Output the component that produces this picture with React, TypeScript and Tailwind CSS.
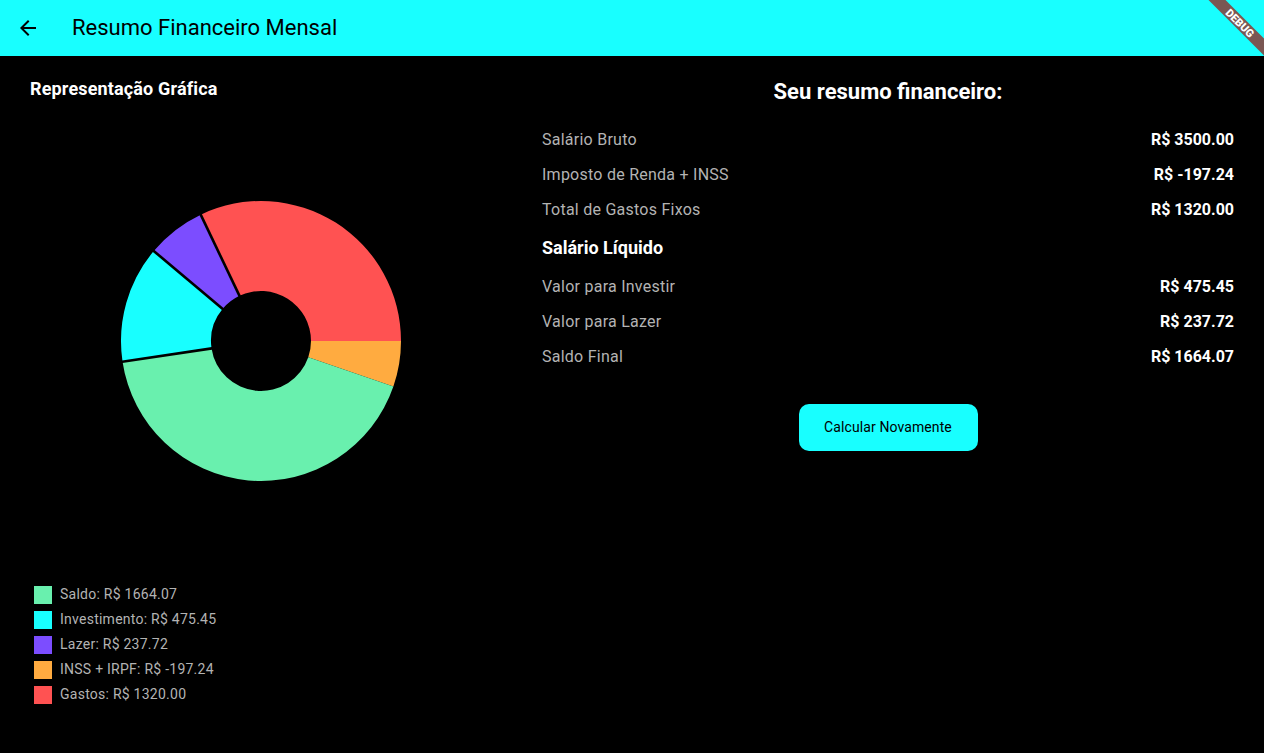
import React from "react";

type Slice = { color: string; from: number; to: number };

// angles in degrees, clockwise from 3 o'clock
const slices: Slice[] = [
  { color: "#ffab40", from: 0, to: 19 },
  { color: "#69f0ae", from: 19, to: 171.5 },
  { color: "#18ffff", from: 171.5, to: 220 },
  { color: "#7c4dff", from: 220, to: 244.5 },
  { color: "#ff5252", from: 244.5, to: 360 },
];

const dividers = [171.5, 220, 244.5];

const legend = [
  { color: "bg-[#69f0ae]", label: "Saldo: R$ 1664.07" },
  { color: "bg-[#18ffff]", label: "Investimento: R$ 475.45" },
  { color: "bg-[#7c4dff]", label: "Lazer: R$ 237.72" },
  { color: "bg-[#ffab40]", label: "INSS + IRPF: R$ -197.24" },
  { color: "bg-[#ff5252]", label: "Gastos: R$ 1320.00" },
];

const rows = [
  { label: "Salário Bruto", value: "R$ 3500.00" },
  { label: "Imposto de Renda + INSS", value: "R$ -197.24" },
  { label: "Total de Gastos Fixos", value: "R$ 1320.00" },
  { label: "Salário Líquido", value: "", strong: true },
  { label: "Valor para Investir", value: "R$ 475.45" },
  { label: "Valor para Lazer", value: "R$ 237.72" },
  { label: "Saldo Final", value: "R$ 1664.07" },
];

function pt(cx: number, cy: number, r: number, deg: number) {
  const a = (deg * Math.PI) / 180;
  return [cx + r * Math.cos(a), cy + r * Math.sin(a)];
}

function sector(from: number, to: number, r0: number, r1: number) {
  const c = 150;
  const large = to - from > 180 ? 1 : 0;
  const [ox0, oy0] = pt(c, c, r1, from);
  const [ox1, oy1] = pt(c, c, r1, to);
  const [ix1, iy1] = pt(c, c, r0, to);
  const [ix0, iy0] = pt(c, c, r0, from);
  return `M${ox0} ${oy0} A${r1} ${r1} 0 ${large} 1 ${ox1} ${oy1} L${ix1} ${iy1} A${r0} ${r0} 0 ${large} 0 ${ix0} ${iy0} Z`;
}

function Donut() {
  return (
    <svg width="300" height="300" viewBox="0 0 300 300">
      {slices.map((s) => (
        <path key={s.color} d={sector(s.from, s.to, 50, 140)} fill={s.color} />
      ))}
      {dividers.map((d) => {
        const [x0, y0] = pt(150, 150, 48, d);
        const [x1, y1] = pt(150, 150, 142, d);
        return <line key={d} x1={x0} y1={y0} x2={x1} y2={y1} stroke="#000" strokeWidth="2.6" />;
      })}
    </svg>
  );
}

export default function App() {
  return (
    <div className="w-[1264px] h-[753px] bg-black font-['Roboto',sans-serif] overflow-hidden">
      <header className="relative h-14 bg-[#18ffff] flex items-center overflow-hidden">
        <div className="w-14 h-14 flex items-center justify-center">
          <svg viewBox="0 0 24 24" className="w-6 h-6 text-black" fill="currentColor">
            <path d="M20 11H7.83l5.59-5.59L12 4l-8 8 8 8 1.41-1.41L7.83 13H20v-2z" />
          </svg>
        </div>
        <h1 className="ml-4 text-[22px] leading-7 text-black">Resumo Financeiro Mensal</h1>
        <div className="absolute top-[17px] right-[-36px] w-[120px] h-[12px] rotate-45 bg-[#7a5753] flex items-center justify-center">
          <span className="text-[11px] leading-none font-black text-white">DEBUG</span>
        </div>
      </header>

      <main className="flex">
        <section className="w-[522px] flex flex-col pl-[30px]">
          <h2 className="mt-[22px] text-[18px] leading-[21px] font-bold tracking-[0.15px] text-white">
            Representação Gráfica
          </h2>
          <div className="mt-[92px] ml-[81px]">
            <Donut />
          </div>
          <ul className="mt-[91px] flex flex-col">
            {legend.map((l) => (
              <li key={l.label} className="h-[25px] flex items-center">
                <span className={`ml-1 w-[18px] h-[18px] ${l.color}`} />
                <span className="ml-2 text-[14px] tracking-[0.25px] text-[#b3b3b3]">{l.label}</span>
              </li>
            ))}
          </ul>
        </section>

        <section className="flex-1 flex flex-col pl-5 pr-[30px]">
          <h2 className="mt-[22px] text-center text-[22px] leading-7 font-bold text-white">
            Seu resumo financeiro:
          </h2>
          <div className="mt-[16px] flex flex-col">
            {rows.map((r) =>
              r.strong ? (
                <div key={r.label} className="h-[42px] pb-[2px] flex items-center">
                  <span className="text-[18px] font-bold text-white">{r.label}</span>
                </div>
              ) : (
                <div key={r.label} className="h-[35px] flex items-center justify-between">
                  <span className="text-[16px] tracking-[0.25px] text-[#b3b3b3]">{r.label}</span>
                  <span className="text-[16px] font-bold text-white">{r.value}</span>
                </div>
              )
            )}
          </div>
          <div className="mt-[30px] flex justify-center">
            <button className="w-[179px] h-[47px] rounded-[10px] bg-[#18ffff] text-[14px] tracking-[0.1px] text-black">
              Calcular Novamente
            </button>
          </div>
        </section>
      </main>
    </div>
  );
}
